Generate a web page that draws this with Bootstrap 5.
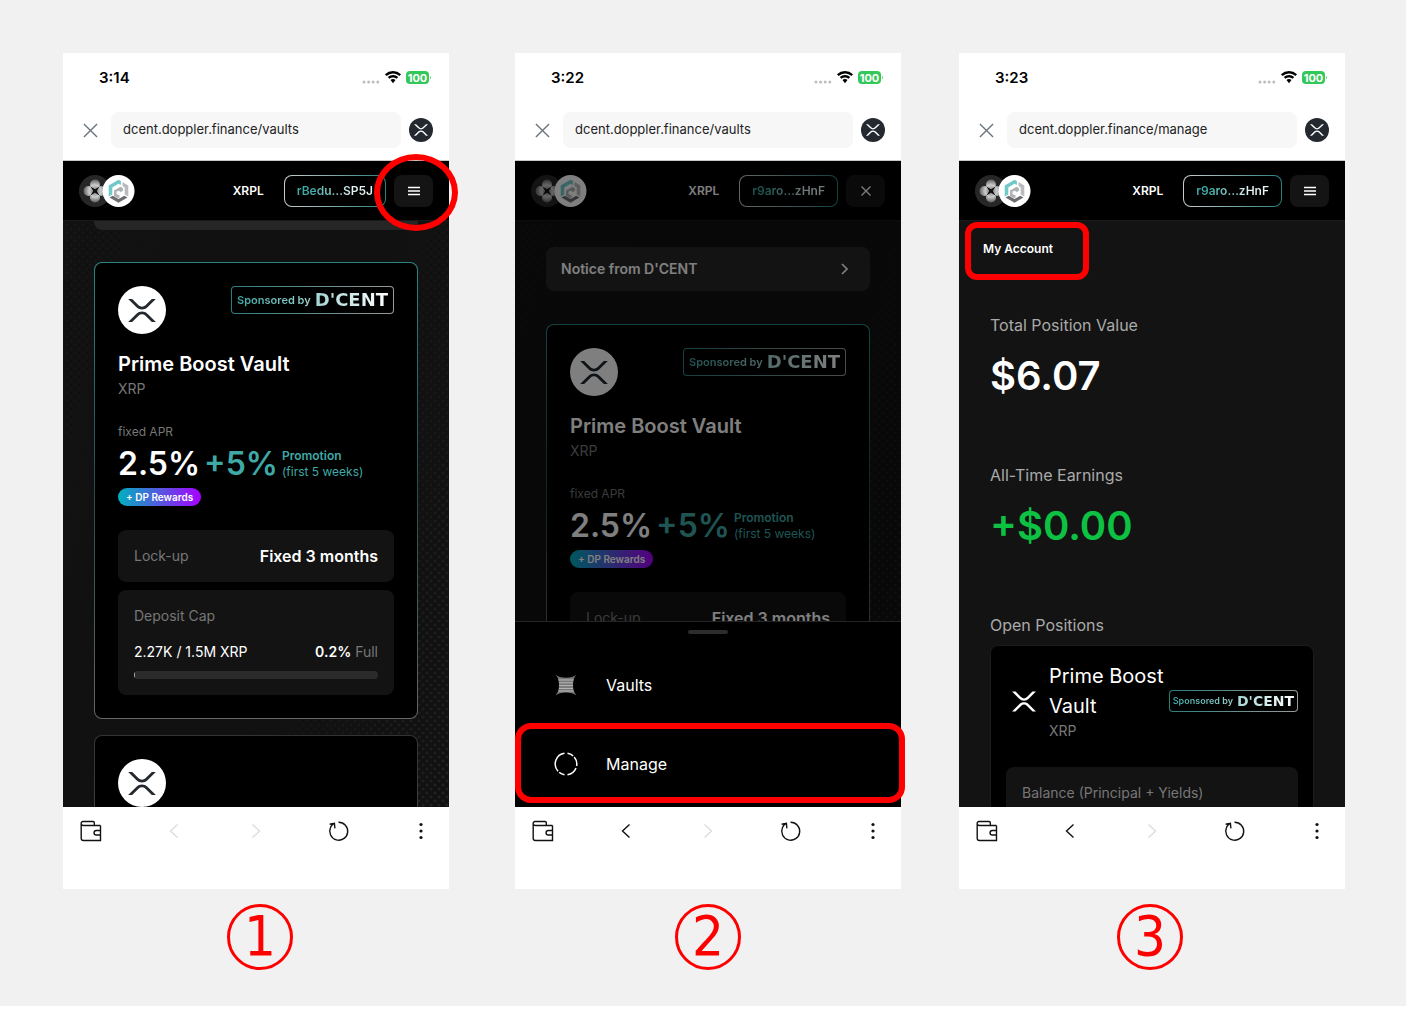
<!DOCTYPE html>
<html lang="en">
<head>
<meta charset="utf-8">
<meta name="viewport" content="width=device-width, initial-scale=1">
<title>Doppler vaults guide</title>
<link href="https://cdn.jsdelivr.net/npm/bootstrap@5.3.0/dist/css/bootstrap.min.css" rel="stylesheet">
<style>
  :root { --teal: #3fa9a6; --ink: #111; --mark-red: #f00; }
  body { font-family: Inter, "Liberation Sans", sans-serif; font-size: 14px; line-height: 20px; background: #fff; }
  svg { display: block; flex: none; }
  button { padding: 0; border: 0; background: none; }
  .guide { background: #f1f1f1; padding: 53px 61px 36px 63px; }
  .step { flex: 1 1 0; min-width: 0; }
  .step-two { margin-left: 66px; }
  .step-three { margin-left: 58px; }
  .phone { background: #fff; }
  .step-no { width: 66px; height: 66px; border: 3px solid var(--mark-red); border-radius: 50%; color: var(--mark-red);
    font: 56px/58px "DejaVu Sans Condensed", "DejaVu Sans", sans-serif; text-align: center; }
  .caption-row { margin-top: 15px; }

  /* browser chrome */
  .status { height: 49px; padding: 0 17px 0 36px; }
  .clock { font-size: 15px; font-weight: 600; color: #000; }
  .address { padding: 10px 16px 12px 20px; border-bottom: 1px solid #c8c8c8; }
  .url { height: 36px; min-width: 0; border: 0; border-radius: 8px; background: #f7f7f7; color: #222; padding: 0 12px 2px; margin: 0 8px 0 13px; font-size: 13px; }
  .toolbar { height: 82px; padding: 12px 16px 0; }
  .toolbar button { width: 24px; height: 24px; color: #111; }
  .toolbar button:disabled { color: #ddd; }

  /* site */
  .site { background: #111; color: #fff; }
  .site-top { height: 60px; background: #000; border-bottom: 1px solid #1a1a1a; padding: 0 16px; }
  .net { font-size: 12px; font-weight: 600; margin-right: 20px; }
  .wallet { height: 32px; padding: 0 12px; font-size: 12px; font-weight: 600; border: 1px solid transparent; border-radius: 8px;
    background: linear-gradient(#000, #000) padding-box, linear-gradient(90deg, #ccc, #2b7f7d) border-box; }
  .fade-text { background: linear-gradient(90deg, var(--teal), #fff); -webkit-background-clip: text; background-clip: text; color: transparent; }
  .wallet .fade-text { background-image: linear-gradient(90deg, var(--teal) 20%, #e8f5f5 75%); }
  .menu-btn { width: 39px; height: 32px; border-radius: 8px; background: #141414; margin-left: 8px; }
  .view { height: 586px; overflow: hidden; padding: 0 31px; }
  .dotted { position: relative; }
  .dotted::before { content: ""; position: absolute; inset: 0;
    background-image: radial-gradient(circle, #222 1px, transparent 2px), radial-gradient(circle, #222 1px, transparent 2px);
    background-size: 8px 8px; background-position: 0 0, 4px 4px;
    -webkit-mask-image: linear-gradient(105deg, rgba(0,0,0,.4), transparent 25%, transparent 60%, #000); mask-image: linear-gradient(105deg, rgba(0,0,0,.4), transparent 25%, transparent 60%, #000); }
  .dotted > * { position: relative; }
  .notice-tail { height: 9px; background: #262626; border-radius: 0 0 8px 8px; margin-bottom: 32px; }
  .notice { width: 100%; height: 44px; margin: 26px 0 33px; padding: 0 18px 0 15px; border-radius: 8px; background: #262626; color: #fff; font-weight: 600; }
  .vault { padding: 23px; border: 1px solid transparent; border-radius: 8px; margin-bottom: 16px;
    background: linear-gradient(#000, #000) padding-box, linear-gradient(#2b8583, #284b4c 50%, #666) border-box; }
  .vault-next { background: linear-gradient(#000, #000) padding-box, linear-gradient(#333, #444) border-box; }
  .coin { width: 48px; height: 48px; border-radius: 50%; background: #fff; color: #23292f; }
  .sponsor { height: 28px; padding: 0 5px; border: 1px solid transparent; border-radius: 4px; font-size: 11px; font-weight: 600; white-space: nowrap;
    background: linear-gradient(#000, #000) padding-box, linear-gradient(90deg, #2b7f7d, #999) border-box; }
  .brand { font: 700 18px/20px "DejaVu Sans", sans-serif; }
  .sponsor-sm { height: 22px; padding: 0 3px; font-size: 9px; }
  .sponsor-sm .brand { font-size: 14px; }
  .name { font-size: 20px; line-height: 24px; font-weight: 600; margin: 18px 0 4px; }
  .muted { color: #777; }
  .line-18 { line-height: 18px; }
  .apr-label { font-size: 12px; line-height: 16px; margin: 26px 0 8px; }
  .rate { font-size: 32px; line-height: 32px; font-weight: 600; }
  .teal { color: var(--teal); }
  .promo { font-size: 12px; line-height: 16px; }
  .pill { height: 18px; line-height: 18px; padding: 0 8px; margin: 8px 0 24px; border-radius: 9px; font-size: 10px; font-weight: 600;
    background: linear-gradient(90deg, #00b1bf, #a800ff); }
  .panel { background: #131313; border-radius: 8px; padding: 16px; }
  .fixed { font-size: 16px; font-weight: 600; }
  .meter { height: 8px; border-radius: 4px; background: #2b2b2b; margin-top: 9px; overflow: hidden; }
  .meter-fill { height: 8px; background: #aaa; }

  /* menu sheet */
  .shade { position: absolute; inset: 0; background: rgba(0,0,0,.5); }
  .sheet { position: absolute; left: 0; right: 0; bottom: 0; background: #000; border-top: 1px solid #242424; padding-bottom: 4px; }
  .grip-area { height: 23px; padding-top: 8px; }
  .grip { width: 40px; height: 4px; border-radius: 2px; background: #2c2c2c; }
  .sheet a { height: 79px; padding-left: 39px; gap: 28px; color: #fff; font-size: 16px; text-decoration: none; position: relative; }

  /* red call-outs */
  .ring { position: absolute; border: 6px solid var(--mark-red); pointer-events: none; z-index: 2; }
  .ring-menu { left: -12px; top: -21px; width: 84px; height: 77px; border-radius: 50%; }
  .ring-manage { inset: -1px -4px 0 0; border-radius: 16px; }
  .ring-account { inset: -18px -36px -22px -18px; border-radius: 12px; }

  /* account */
  .account { background: #131313; }
  .tab { font-size: 12px; line-height: 18px; font-weight: 600; color: #fff; text-decoration: none; margin: 19px 0 55px -7px; position: relative; }
  .stat-label { font-size: 16px; line-height: 24px; font-weight: 400; color: #aaa; margin: 0; }
  .stat { font-size: 40px; line-height: 48px; font-weight: 600; margin: 15px 0 63px; }
  .gain { color: #0dc143; }
  .position { background: #000; border: 1px solid #1c1c1c; border-radius: 8px; padding: 15px; margin-top: 8px; }
  .pos-icon { width: 35px; margin-right: 8px; flex: none; }
  .pos-name { font-size: 20px; line-height: 30px; font-weight: 400; margin: 0; }
  .balance { margin-top: 26px; height: 80px; }
</style>
<script src="https://cdn.jsdelivr.net/npm/bootstrap@5.3.0/dist/js/bootstrap.bundle.min.js"></script>
</head>
<body>
<svg width="0" height="0" class="position-absolute" aria-hidden="true">
  <defs>
    <radialGradient id="petal" gradientUnits="userSpaceOnUse" cx="16" cy="16" r="12"><stop offset=".2" stop-color="#999"/><stop offset=".5" stop-color="#ccc"/><stop offset="1" stop-color="#555"/></radialGradient>
    <symbol id="xrp" viewBox="0 0 512 424"><path fill="currentColor" d="M437,0h74L357,152.48c-55.77,55.19-146.19,55.19-202,0L.94,0H75L192,115.83a91.11,91.11,0,0,0,127.91,0ZM74.05,424H0L155,270.58c55.77-55.19,146.19-55.19,202,0L512,424H438L320,307.23a91.11,91.11,0,0,0-127.91,0Z"/></symbol>
    <symbol id="logo" viewBox="0 0 56 32">
      <circle cx="16" cy="16" r="16" fill="#272727"/>
      <g fill="url(#petal)"><circle cx="16" cy="9.500" r="5"/><circle cx="16" cy="22.500" r="5"/><circle cx="9.500" cy="16" r="5"/><circle cx="22.500" cy="16" r="5"/></g>
      <path fill="#111" d="m11.500 11.500 4.500 2.700 4.500-2.700-2.700 4.500 2.700 4.500-4.500-2.700-4.500 2.700 2.700-4.500Z"/>
      <circle cx="39.500" cy="16" r="16" fill="#fff"/>
      <path fill="#72cac8" d="M29.700 10.400 39.500 4.800l2.400 1.300v4l-2.400-1.300-6.200 3.600v7.200l-3.600 2Z"/>
      <path fill="#b9bbbd" d="m43.500 7.100 5.800 3.300v11.200l-3.600-2v-7.200l-2.200-1.300Z"/>
      <path fill="#b0b2b4" d="m41.500 11.800 2.500 1.400v2.600l-3.500 2v4.600l-1.500.8-4-2.300v-5.300Z"/>
      <path fill="#fff" d="m39.500 15.700 2 1.100v2.300l-2 1.100-2-1.100v-2.300Z"/>
      <path fill="#6b6d70" d="m30.500 22.600 3.300-1.900 5.700 3.300 5.700-3.300 3.300 1.900-9 5.100Z"/>
    </symbol>
    <symbol id="wifi" viewBox="0 0 16 12"><path fill="#000" d="M8 2.200c2.200 0 4.300.9 5.900 2.300l1.500-1.600A11 11 0 0 0 8 0 11 11 0 0 0 .6 2.900l1.500 1.600A8.800 8.800 0 0 1 8 2.200Zm0 3.700c1.300 0 2.400.5 3.300 1.300l1.500-1.600A7.100 7.100 0 0 0 8 3.800c-1.800 0-3.500.7-4.800 1.800l1.500 1.600A5 5 0 0 1 8 5.900Zm2.300 2.300A3.500 3.500 0 0 0 8 7.400c-.9 0-1.700.3-2.300.8L8 11.200Z"/></symbol>
    <symbol id="signal" viewBox="0 0 18 4"><g fill="#bdbdbd"><circle cx="2" cy="2" r="1.500"/><circle cx="6.600" cy="2" r="1.500"/><circle cx="11.200" cy="2" r="1.500"/><circle cx="15.800" cy="2" r="1.500"/></g></symbol>
    <symbol id="battery" viewBox="0 0 26 13"><rect width="23" height="13" rx="4" fill="#34c759"/><path fill="#34c759" d="M24 4.500q1.500 2 0 4Z"/><text x="11.500" y="10.500" text-anchor="middle" font-family="Inter, sans-serif" font-size="11" font-weight="700" fill="#fff">100</text></symbol>
    <symbol id="close" viewBox="0 0 16 16"><path d="m1 1 14 14M15 1 1 15" stroke="currentColor" fill="none" stroke-width="1.500"/></symbol>
    <symbol id="close-sm" viewBox="0 0 10 10"><path d="m.5.500 9 9M9.500.500l-9 9" stroke="currentColor" fill="none" stroke-width="1.300"/></symbol>
    <symbol id="bars" viewBox="0 0 14 10"><path d="M1 1.500h12M1 5h12M1 8.500h12" stroke="#fff" stroke-width="1.300"/></symbol>
    <symbol id="wallet" viewBox="0 0 24 24"><path d="M21.500 6.500v15h-17a2.300 2.300 0 0 1-2.300-2.300V4.300A1.800 1.800 0 0 1 4 2.500h10a1.300 1.300 0 0 1 1.300 1.300v2.700M2.200 5c.3 1 1 1.500 2.100 1.500h17.200M21.500 11.500h-4.200a2.200 2.200 0 0 0 0 4.500h4.200" fill="none" stroke="#111" stroke-width="1.400"/></symbol>
    <symbol id="back" viewBox="0 0 24 24"><path d="m15.500 5.500-7 6.500 7 6.500" fill="none" stroke="currentColor" stroke-width="1.400"/></symbol>
    <symbol id="forward" viewBox="0 0 24 24"><path d="m8.500 5.500 7 6.500-7 6.500" fill="none" stroke="currentColor" stroke-width="1.400"/></symbol>
    <symbol id="reload" viewBox="0 0 24 24"><path d="M11.500 3.200A9 9 0 1 1 3.500 8.500C4.200 6.800 5.200 5.700 6.700 4.700M2.600 5.300l4.800-.9.500 5" fill="none" stroke="#111" stroke-width="1.400"/></symbol>
    <symbol id="more" viewBox="0 0 24 24"><g fill="#111"><circle cx="12" cy="5.500" r="1.600"/><circle cx="12" cy="12" r="1.600"/><circle cx="12" cy="18.500" r="1.600"/></g></symbol>
    <symbol id="vaults" viewBox="0 0 24 24"><path fill="#777" d="M1.500 1.500Q5 4.800 12 4.800t10.500-3.300Q19 5.500 19 12t3.500 10.500Q19 19.500 12 19.500T1.500 22.500Q5 18.500 5 12T1.500 1.500Z"/><path d="M4.500 7h15M5 9.800h14M5 12.600h14M5 15.400h14M4.500 18h15" stroke="#ccc" stroke-width=".8"/></symbol>
    <symbol id="manage" viewBox="0 0 24 24"><g fill="none" stroke="#fff" stroke-width="1.500"><path d="M10.500 1.300A10.800 10.800 0 0 0 4 19.200M5.200 20.400a10.800 10.800 0 0 0 5.300 2.300M13.500 1.300a10.800 10.800 0 0 1 5.600 2.600M20.200 5a10.800 10.800 0 0 1 2.400 9M22 15.900a10.800 10.800 0 0 1-8.500 6.800"/></g></symbol>
  </defs>
</svg>

<main class="guide d-flex align-items-start">
  <section class="step">
    <div class="phone">
      <div class="status d-flex align-items-center justify-content-between">
        <span class="clock">3:14</span>
        <span class="d-flex align-items-center">
          <svg width="18" height="4" class="mt-2 me-1"><use href="#signal"/></svg>
          <svg width="18" height="13" class="me-1"><use href="#wifi"/></svg>
          <svg width="26" height="13" role="img" aria-label="Battery 100"><use href="#battery"/></svg>
        </span>
      </div>
      <div class="address d-flex align-items-center">
        <button type="button" class="text-secondary" aria-label="Close"><svg width="15" height="15"><use href="#close"/></svg></button>
        <input class="url flex-fill" type="text" aria-label="Address" value="dcent.doppler.finance/vaults">
        <button type="button" aria-label="Network"><svg width="24" height="24"><circle cx="12" cy="12" r="12" fill="#23292f"/><svg x="5" y="6" width="14" height="12" color="#fff"><use href="#xrp"/></svg></svg></button>
      </div>
      <div class="site">
        <header class="site-top d-flex align-items-center">
          <a href="#" class="me-auto" aria-label="Home"><svg width="56" height="32"><use href="#logo"/></svg></a>
          <span class="net">XRPL</span>
          <button type="button" class="wallet"><span class="fade-text">rBedu…SP5J</span></button>
          <div class="position-relative">
            <button type="button" class="menu-btn d-flex align-items-center justify-content-center" aria-label="Menu"><svg width="14" height="10"><use href="#bars"/></svg></button>
            <span class="ring ring-menu"></span>
          </div>
        </header>
        <div class="view dotted">
          <div class="notice-tail"></div>
          <article class="vault">
            <div class="d-flex justify-content-between align-items-start">
              <span class="coin d-flex align-items-center justify-content-center"><svg width="28" height="23"><use href="#xrp"/></svg></span>
              <span class="sponsor d-flex align-items-center"><span class="fade-text d-flex align-items-center gap-1">Sponsored by <span class="brand">D'CENT</span></span></span>
            </div>
            <h2 class="name">Prime Boost Vault</h2>
            <div class="muted line-18">XRP</div>
            <div class="muted apr-label">fixed APR</div>
            <div class="d-flex align-items-center gap-1">
              <span class="rate">2.5%</span><span class="rate teal">+5%</span>
              <span class="promo teal"><b class="fw-semibold d-block">Promotion</b>(first 5 weeks)</span>
            </div>
            <div class="d-flex"><span class="pill">+ DP Rewards</span></div>
            <div class="panel d-flex justify-content-between mb-2"><span class="muted">Lock-up</span><span class="fixed">Fixed 3 months</span></div>
            <div class="panel">
              <div class="muted mb-3">Deposit Cap</div>
              <div class="d-flex justify-content-between"><span>2.27K / 1.5M XRP</span><span><b class="fw-semibold">0.2%</b> <span class="muted">Full</span></span></div>
              <div class="meter" role="progressbar" aria-label="Deposit cap" aria-valuenow="0.2" aria-valuemin="0" aria-valuemax="100"><div class="meter-fill" style="width:0.2%"></div></div>
            </div>
          </article>
          <article class="vault vault-next">
            <span class="coin d-flex align-items-center justify-content-center"><svg width="28" height="23"><use href="#xrp"/></svg></span>
          </article>
        </div>
      </div>
      <nav class="toolbar d-flex justify-content-between align-items-start">
        <button type="button" aria-label="Wallet"><svg width="24" height="24"><use href="#wallet"/></svg></button>
        <button type="button" aria-label="Back" disabled><svg width="24" height="24"><use href="#back"/></svg></button>
        <button type="button" aria-label="Forward" disabled><svg width="24" height="24"><use href="#forward"/></svg></button>
        <button type="button" aria-label="Reload"><svg width="24" height="24"><use href="#reload"/></svg></button>
        <button type="button" aria-label="More"><svg width="24" height="24"><use href="#more"/></svg></button>
      </nav>
    </div>
    <div class="caption-row d-flex justify-content-center ps-2"><span class="step-no">1</span></div>
  </section>

  <section class="step step-two">
    <div class="phone">
      <div class="status d-flex align-items-center justify-content-between">
        <span class="clock">3:22</span>
        <span class="d-flex align-items-center">
          <svg width="18" height="4" class="mt-2 me-1"><use href="#signal"/></svg>
          <svg width="18" height="13" class="me-1"><use href="#wifi"/></svg>
          <svg width="26" height="13" role="img" aria-label="Battery 100"><use href="#battery"/></svg>
        </span>
      </div>
      <div class="address d-flex align-items-center">
        <button type="button" class="text-secondary" aria-label="Close"><svg width="15" height="15"><use href="#close"/></svg></button>
        <input class="url flex-fill" type="text" aria-label="Address" value="dcent.doppler.finance/vaults">
        <button type="button" aria-label="Network"><svg width="24" height="24"><circle cx="12" cy="12" r="12" fill="#23292f"/><svg x="5" y="6" width="14" height="12" color="#fff"><use href="#xrp"/></svg></svg></button>
      </div>
      <div class="site position-relative">
        <header class="site-top d-flex align-items-center">
          <a href="#" class="me-auto" aria-label="Home"><svg width="56" height="32"><use href="#logo"/></svg></a>
          <span class="net">XRPL</span>
          <button type="button" class="wallet"><span class="fade-text">r9aro…zHnF</span></button>
          <button type="button" class="menu-btn d-flex align-items-center justify-content-center text-white" aria-label="Close menu"><svg width="10" height="10"><use href="#close-sm"/></svg></button>
        </header>
        <div class="view dotted">
          <button type="button" class="notice d-flex align-items-center justify-content-between">Notice from D'CENT <svg width="16" height="16" viewBox="0 0 16 16"><path d="m6 3 5 5-5 5" fill="none" stroke="#fff" stroke-width="1.700"/></svg></button>
          <article class="vault">
            <div class="d-flex justify-content-between align-items-start">
              <span class="coin d-flex align-items-center justify-content-center"><svg width="28" height="23"><use href="#xrp"/></svg></span>
              <span class="sponsor d-flex align-items-center"><span class="fade-text d-flex align-items-center gap-1">Sponsored by <span class="brand">D'CENT</span></span></span>
            </div>
            <h2 class="name">Prime Boost Vault</h2>
            <div class="muted line-18">XRP</div>
            <div class="muted apr-label">fixed APR</div>
            <div class="d-flex align-items-center gap-1">
              <span class="rate">2.5%</span><span class="rate teal">+5%</span>
              <span class="promo teal"><b class="fw-semibold d-block">Promotion</b>(first 5 weeks)</span>
            </div>
            <div class="d-flex"><span class="pill">+ DP Rewards</span></div>
            <div class="panel d-flex justify-content-between"><span class="muted">Lock-up</span><span class="fixed">Fixed 3 months</span></div>
          </article>
        </div>
        <div class="shade"></div>
        <nav class="sheet">
          <div class="grip-area d-flex justify-content-center"><span class="grip"></span></div>
          <a href="#" class="d-flex align-items-center"><svg width="24" height="24"><use href="#vaults"/></svg>Vaults</a>
          <a href="#" class="d-flex align-items-center"><svg width="24" height="24"><use href="#manage"/></svg>Manage<span class="ring ring-manage"></span></a>
        </nav>
      </div>
      <nav class="toolbar d-flex justify-content-between align-items-start">
        <button type="button" aria-label="Wallet"><svg width="24" height="24"><use href="#wallet"/></svg></button>
        <button type="button" aria-label="Back"><svg width="24" height="24"><use href="#back"/></svg></button>
        <button type="button" aria-label="Forward" disabled><svg width="24" height="24"><use href="#forward"/></svg></button>
        <button type="button" aria-label="Reload"><svg width="24" height="24"><use href="#reload"/></svg></button>
        <button type="button" aria-label="More"><svg width="24" height="24"><use href="#more"/></svg></button>
      </nav>
    </div>
    <div class="caption-row d-flex justify-content-center"><span class="step-no">2</span></div>
  </section>

  <section class="step step-three">
    <div class="phone">
      <div class="status d-flex align-items-center justify-content-between">
        <span class="clock">3:23</span>
        <span class="d-flex align-items-center">
          <svg width="18" height="4" class="mt-2 me-1"><use href="#signal"/></svg>
          <svg width="18" height="13" class="me-1"><use href="#wifi"/></svg>
          <svg width="26" height="13" role="img" aria-label="Battery 100"><use href="#battery"/></svg>
        </span>
      </div>
      <div class="address d-flex align-items-center">
        <button type="button" class="text-secondary" aria-label="Close"><svg width="15" height="15"><use href="#close"/></svg></button>
        <input class="url flex-fill" type="text" aria-label="Address" value="dcent.doppler.finance/manage">
        <button type="button" aria-label="Network"><svg width="24" height="24"><circle cx="12" cy="12" r="12" fill="#23292f"/><svg x="5" y="6" width="14" height="12" color="#fff"><use href="#xrp"/></svg></svg></button>
      </div>
      <div class="site">
        <header class="site-top d-flex align-items-center">
          <a href="#" class="me-auto" aria-label="Home"><svg width="56" height="32"><use href="#logo"/></svg></a>
          <span class="net">XRPL</span>
          <button type="button" class="wallet"><span class="fade-text">r9aro…zHnF</span></button>
          <button type="button" class="menu-btn d-flex align-items-center justify-content-center" aria-label="Menu"><svg width="14" height="10"><use href="#bars"/></svg></button>
        </header>
        <div class="view account">
          <div class="d-flex"><a href="#" class="tab">My Account<span class="ring ring-account"></span></a></div>
          <h2 class="stat-label">Total Position Value</h2>
          <div class="stat">$6.07</div>
          <h2 class="stat-label">All-Time Earnings</h2>
          <div class="stat gain">+$0.00</div>
          <h2 class="stat-label">Open Positions</h2>
          <article class="position">
            <div class="d-flex align-items-center">
              <span class="pos-icon d-flex justify-content-center"><svg width="24" height="21"><use href="#xrp"/></svg></span>
              <div class="flex-fill">
                <h3 class="pos-name">Prime Boost Vault</h3>
                <div class="muted">XRP</div>
              </div>
              <span class="sponsor sponsor-sm d-flex align-items-center"><span class="fade-text d-flex align-items-center gap-1">Sponsored by <span class="brand">D'CENT</span></span></span>
            </div>
            <div class="panel balance muted">Balance (Principal + Yields)</div>
          </article>
        </div>
      </div>
      <nav class="toolbar d-flex justify-content-between align-items-start">
        <button type="button" aria-label="Wallet"><svg width="24" height="24"><use href="#wallet"/></svg></button>
        <button type="button" aria-label="Back"><svg width="24" height="24"><use href="#back"/></svg></button>
        <button type="button" aria-label="Forward" disabled><svg width="24" height="24"><use href="#forward"/></svg></button>
        <button type="button" aria-label="Reload"><svg width="24" height="24"><use href="#reload"/></svg></button>
        <button type="button" aria-label="More"><svg width="24" height="24"><use href="#more"/></svg></button>
      </nav>
    </div>
    <div class="caption-row d-flex justify-content-center pe-1"><span class="step-no">3</span></div>
  </section>
</main>
</body>
</html>
